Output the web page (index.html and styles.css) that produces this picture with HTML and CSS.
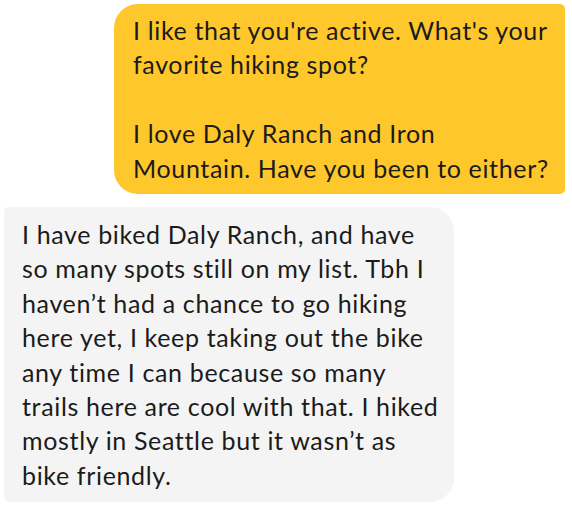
FILE: index.html
```html
<!DOCTYPE html>
<html>
<head>
<meta charset="utf-8">
<link rel="stylesheet" href="styles.css">
</head>
<body>
<div class="thread">
  <div class="bubble sent">I like that you're active. What's your<br>favorite hiking spot?<br><br>I love Daly Ranch and Iron<br>Mountain. Have you been to either?</div>
  <div class="bubble received">I have biked Daly Ranch, and have<br>so many spots still on my list. Tbh I<br>haven’t had a chance to go hiking<br>here yet, I keep taking out the bike<br>any time I can because so many<br>trails here are cool with that. I hiked<br>mostly in Seattle but it wasn’t as<br>bike friendly.</div>
</div>
</body>
</html>
```
FILE: styles.css
```css
html, body {
  margin: 0;
  padding: 0;
  background: #ffffff;
}
.thread {
  width: 572px;
  display: flex;
  flex-direction: column;
  gap: 13px;
  padding-top: 4px;
}
.bubble {
  box-sizing: border-box;
  width: 451px;
  font-family: "Lato", "Liberation Sans", sans-serif;
  font-size: 25px;
  letter-spacing: 0.65px;
  line-height: 34.4px;
  color: #1b1b1b;
  white-space: nowrap;
}
.sent {
  align-self: flex-end;
  margin-right: 7px;
  background: #fec72c;
  border-radius: 24px 5px 5px 24px;
  padding: 9px 8px 9px 19px;
}
.received {
  align-self: flex-start;
  margin-left: 4px;
  width: 450px;
  background: #f4f4f4;
  border-radius: 5px 24px 24px 5px;
  padding: 10px 8px 10px 18px;
}
```
